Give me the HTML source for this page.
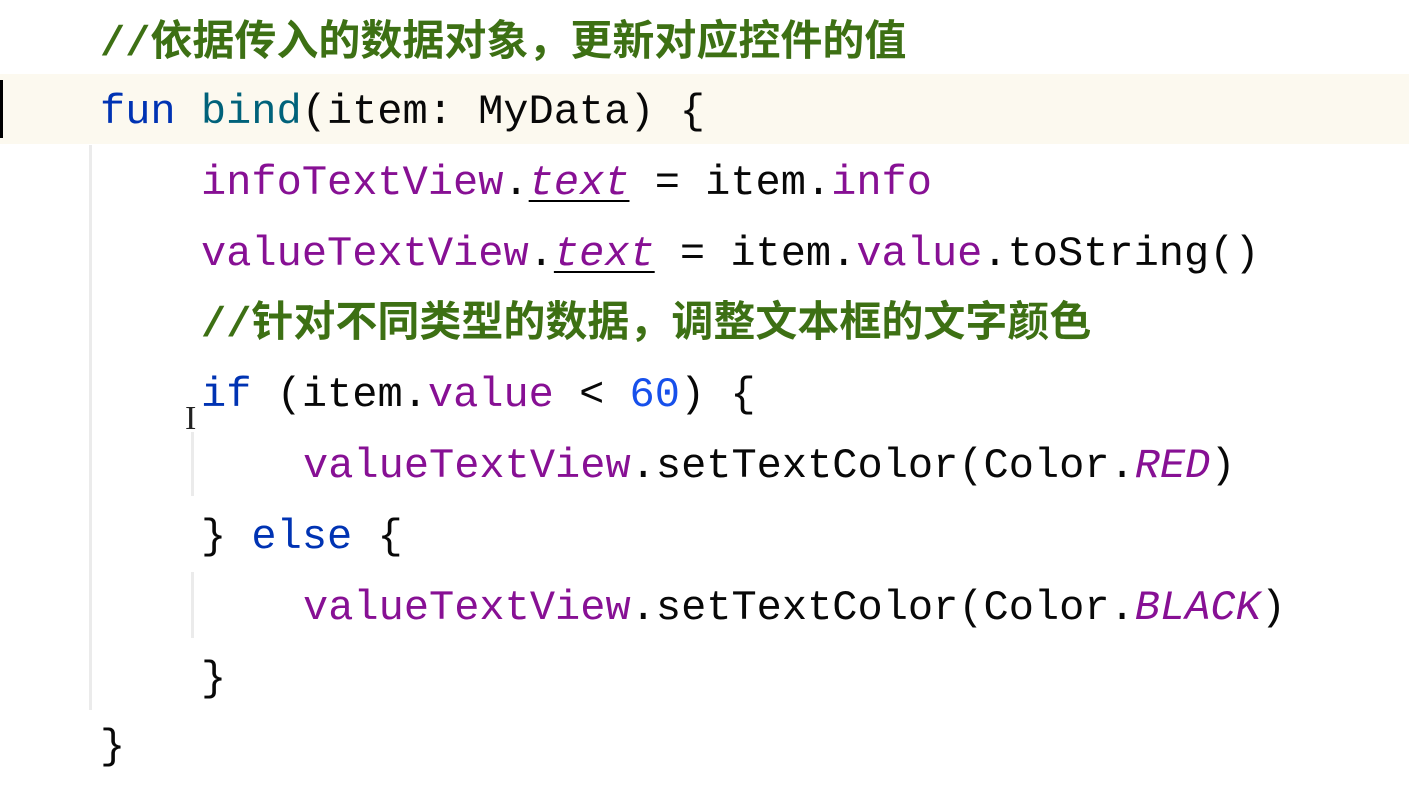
<!DOCTYPE html>
<html><head><meta charset="utf-8"><style>
html,body{margin:0;padding:0;background:#fff;width:1409px;height:810px;overflow:hidden;position:relative}
.l{position:absolute;left:0;height:70px;line-height:70px;white-space:pre;font-family:"Liberation Mono","Noto Sans CJK SC",monospace;font-size:42px;color:#080808}
.c{color:#3d7014;font-weight:bold;font-family:"Liberation Mono","Noto Sans CJK SC",monospace}
.k{color:#0033b3}.f{color:#00627a}.p{color:#871094}.n{color:#1750eb}
.i{font-style:italic}.u{text-decoration:underline;text-decoration-thickness:2px;text-underline-offset:6px;text-decoration-color:#000}
.g{position:absolute;width:3px;background:#ebebeb}
</style></head><body>
<div style="position:absolute;left:0;top:74px;width:1409px;height:70px;background:#fcf9ef"></div>
<div style="position:absolute;left:0;top:80px;width:3px;height:58px;background:#000"></div>
<div class="g" style="left:89px;top:145px;height:565px"></div>
<div class="g" style="left:191px;top:432px;height:64px"></div>
<div class="g" style="left:191px;top:572px;height:66px"></div>
<div style="position:absolute;left:185px;top:400px;font-family:'Liberation Serif',serif;font-size:34px;color:#222">I</div>
<div class="l" style="top:9px;left:100px"><span class="c">//依据传入的数据对象，更新对应控件的值</span></div>
<div class="l" style="top:77px;left:100px"><span class="k">fun</span> <span class="f">bind</span>(item: MyData) {</div>
<div class="l" style="top:148px;left:201px"><span class="p">infoTextView</span>.<span class="p i u">text</span> = item.<span class="p">info</span></div>
<div class="l" style="top:219px;left:201px"><span class="p">valueTextView</span>.<span class="p i u">text</span> = item.<span class="p">value</span>.toString()</div>
<div class="l" style="top:290px;left:201px"><span class="c">//针对不同类型的数据，调整文本框的文字颜色</span></div>
<div class="l" style="top:360px;left:201px"><span class="k">if</span> (item.<span class="p">value</span> &lt; <span class="n">60</span>) {</div>
<div class="l" style="top:431px;left:303px"><span class="p">valueTextView</span>.setTextColor(Color.<span class="p i">RED</span>)</div>
<div class="l" style="top:502px;left:201px">} <span class="k">else</span> {</div>
<div class="l" style="top:573px;left:303px"><span class="p">valueTextView</span>.setTextColor(Color.<span class="p i">BLACK</span>)</div>
<div class="l" style="top:644px;left:201px">}</div>
<div class="l" style="top:712px;left:100px">}</div>
</body></html>
